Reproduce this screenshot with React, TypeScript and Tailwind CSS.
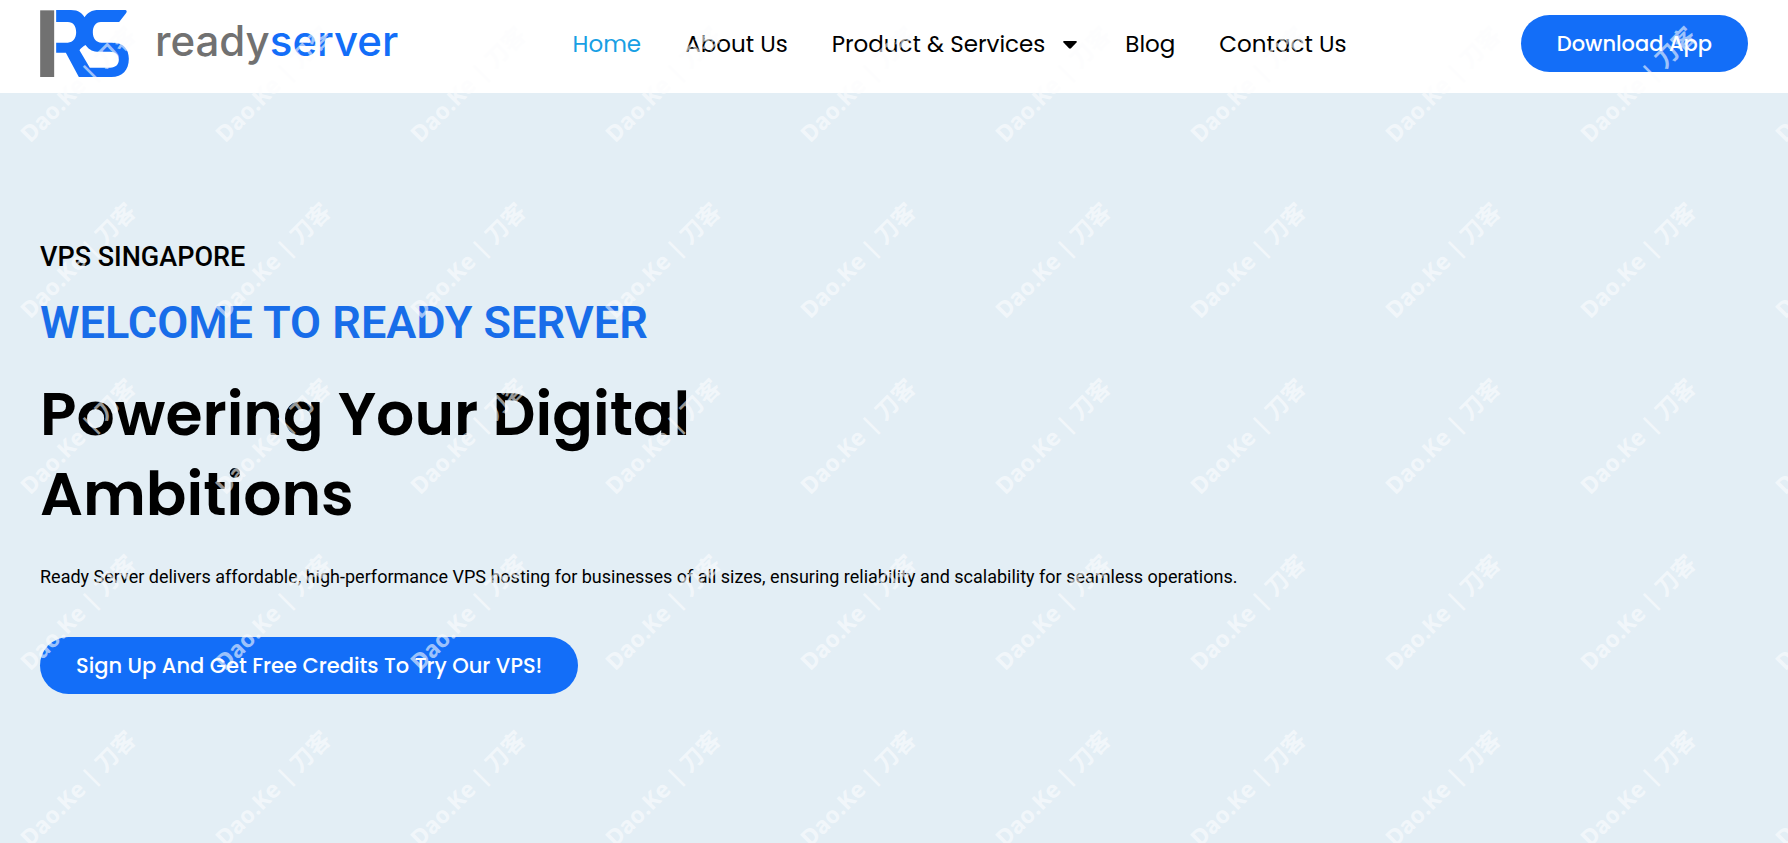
import React from "react";

const geometric = "font-[Poppins,Inter,sans-serif]";

const navLinks = [
  { label: "Home", active: true },
  { label: "About Us" },
  { label: "Product & Services", menu: true },
  { label: "Blog" },
  { label: "Contact Us" },
];

function LogoMark() {
  return (
    <svg viewBox="120 30 266 201" className="h-[67px] w-[89px]" aria-hidden="true">
      <rect x="120" y="31" width="42" height="200" fill="#717171" />
      <path
        fill="#136ef8"
        fillRule="evenodd"
        d="M168 30H212C236 30 246 40 253 52C262 38 274 30 296 30H376Q382 32 378 39L357 66H302C286 66 278 80 278 97C278 116 288 128 304 128H340C370 128 386 148 386 176C386 210 366 231 334 231H236L197 158H168V128H203C219 128 228 114 228 97C228 78 219 66 203 66H168ZM256 135C248 139 240 147 238 151L269 203H330C347 203 356 192 356 179C356 164 346 155 330 155H290C274 154 264 146 256 135Z"
      />
    </svg>
  );
}

function Header() {
  return (
    <header className="flex h-[93px] items-center justify-between bg-white px-10 pb-[6px]">
      <a href="#" className="flex items-center gap-[26px]" aria-label="readyserver">
        <LogoMark />
        <span className="pb-[6px] font-[Inter,sans-serif] text-[42px] leading-none font-medium text-[#717171]">
          ready<span className="text-[#136ef8]">server</span>
        </span>
      </a>
      <nav aria-label="Main" className={`flex items-center gap-11 pt-[2px] text-[23px] text-black ${geometric}`}>
        {navLinks.map((link) => (
          <a
            key={link.label}
            href="#"
            className={link.active ? "text-[#189fe4]" : "flex items-center gap-[18px]"}
          >
            {link.label}
            {link.menu && (
              <svg viewBox="0 0 14 8" className="mr-1 h-2 w-[14px]" aria-hidden="true">
                <path d="M1 0H13Q14.400 .4 13.500 1.500L8 7.300Q7 8.200 6 7.300L.5 1.500Q-.4 .4 1 0Z" />
              </svg>
            )}
          </a>
        ))}
      </nav>
      <button type="button" className={`h-[57px] rounded-full bg-[#136ef8] px-9 text-[21px] font-medium text-white ${geometric}`}>
        Download App
      </button>
    </header>
  );
}

function Hero() {
  return (
    <main className="flex flex-1 flex-col items-start bg-[#e3eef5] px-10 pt-[148px] pb-20 font-[Roboto,sans-serif] text-black">
      <h3 className="text-[27px] leading-8 font-medium">VPS SINGAPORE</h3>
      <h2 className="mt-6 text-[45px] leading-[52px] font-semibold text-[#186de9]">WELCOME TO READY SERVER</h2>
      <h1 className={`mt-[25px] max-w-[700px] text-[60px] leading-[80px] font-semibold ${geometric}`}>
        Powering Your Digital Ambitions
      </h1>
      <p className="mt-[29px] text-[18px] leading-7">
        Ready Server delivers affordable, high-performance VPS hosting for businesses of all sizes, ensuring reliability and scalability for seamless operations.
      </p>
      <button type="button" className={`mt-[46px] h-[57px] rounded-full bg-[#136ef8] px-9 text-[21px] font-medium text-white ${geometric}`}>
        Sign Up And Get Free Credits To Try Our VPS!
      </button>
    </main>
  );
}

function Watermark() {
  return (
    <div className="pointer-events-none absolute inset-0 overflow-hidden" aria-hidden="true">
      <div className="-mt-1 -ml-5 grid auto-rows-[176px] grid-cols-[repeat(10,195px)]">
        {Array.from({ length: 50 }, (_, i) => (
          <div key={i} className="flex items-center justify-center">
            <span className="-rotate-45 font-['Noto_Sans','Noto_Sans_CJK_SC',sans-serif] text-[23px] font-bold whitespace-nowrap text-[#fcfdfe]/60">
              Dao.Ke | 刀客
            </span>
          </div>
        ))}
      </div>
    </div>
  );
}

export default function App() {
  return (
    <div className="relative flex min-h-screen flex-col">
      <Header />
      <Hero />
      <Watermark />
    </div>
  );
}
